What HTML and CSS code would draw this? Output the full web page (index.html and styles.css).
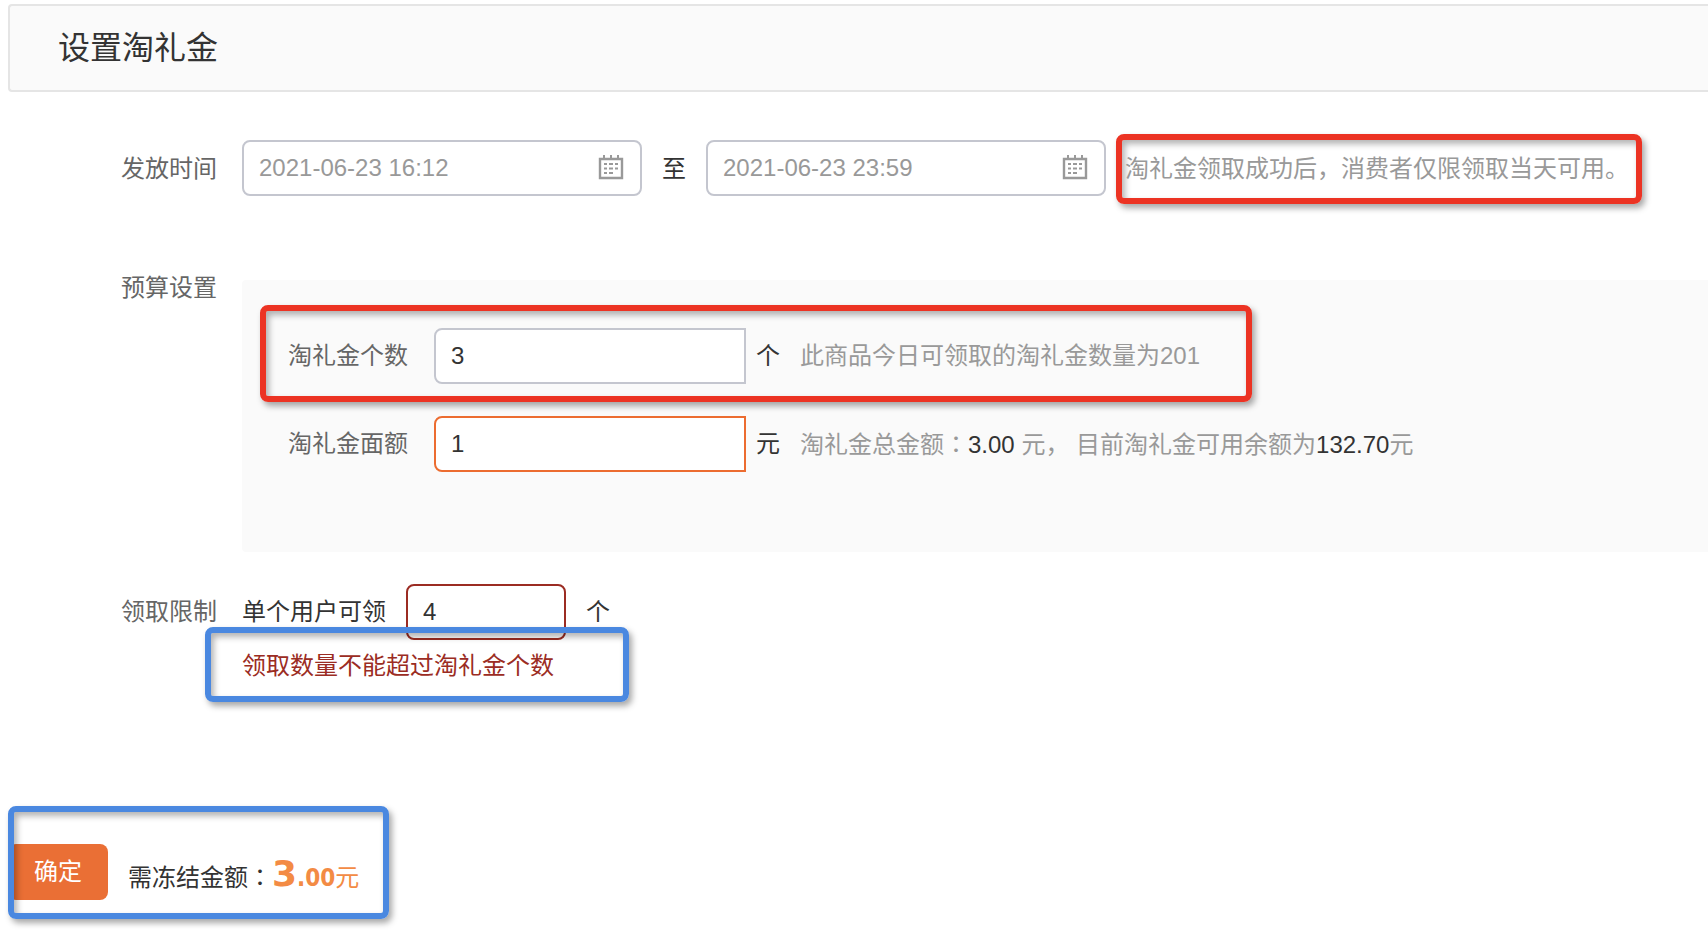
FILE: index.html
```
<!DOCTYPE html>
<html lang="zh-CN">
<head>
<meta charset="utf-8">
<title>设置淘礼金</title>
<link rel="stylesheet" href="styles.css">
</head>
<body>
<svg class="defs" aria-hidden="true">
  <symbol id="calendar" viewBox="0 0 26 26">
    <path d="M2 5h22v19H2z" fill="none" stroke="currentColor" stroke-width="2.400"/>
    <path d="M5 1h2v4H5zM12 1h2v4h-2zM19 1h2v4h-2z" fill="currentColor"/>
    <path d="M6 10h3M11 10h4M17 10h3M6 14.500h3M11 14.500h4M17 14.500h3M6 19h3M11 19h4" stroke="currentColor" stroke-width="2"/>
  </symbol>
</svg>
<header class="page-head"><h1 class="title">设置淘礼金</h1></header>
<form class="form">
  <div class="row row-time">
    <label class="label" for="start">发放时间</label>
    <div class="date"><input class="input muted" id="start" type="text" value="2021-06-23 16:12"><svg class="icon"><use href="#calendar"/></svg></div>
    <label class="to" for="end">至</label>
    <div class="date"><input class="input muted" id="end" type="text" value="2021-06-23 23:59"><svg class="icon"><use href="#calendar"/></svg></div>
    <p class="mark red note">淘礼金领取成功后，消费者仅限领取当天可用。</p>
  </div>
  <div class="row row-budget">
    <span class="label">预算设置</span>
    <div class="panel">
      <div class="line mark red">
        <label class="name" for="count">淘礼金个数</label>
        <input class="input amount" id="count" type="text" value="3">
        <span class="unit">个</span>
        <span class="hint">此商品今日可领取的淘礼金数量为201</span>
      </div>
      <div class="line plain">
        <label class="name" for="value">淘礼金面额</label>
        <input class="input amount active" id="value" type="text" value="1">
        <span class="unit">元</span>
        <span class="hint">淘礼金总金额<span class="colon" lang="zh-TW">：</span><b class="num">3.00</b> 元， 目前淘礼金可用余额为<b class="num">132.70</b>元</span>
      </div>
    </div>
  </div>
  <div class="row row-limit">
    <span class="label">领取限制</span>
    <div class="limit">
      <div class="limit-line">
        <label for="limit">单个用户可领</label>
        <input class="input small invalid" id="limit" type="text" value="4">
        <span>个</span>
      </div>
      <p class="mark blue error">领取数量不能超过淘礼金个数</p>
    </div>
  </div>
  <div class="footer">
    <button class="submit" type="button">确定</button>
    <p class="frozen">需冻结金额<span class="colon" lang="zh-TW">：</span><span class="total"><b class="big">3</b><b class="dec">.00</b>元</span></p>
    <span class="frame mark blue"></span>
  </div>
</form>
</body>
</html>
```
FILE: styles.css
```
* { box-sizing: border-box; }

body {
  margin: 0;
  min-height: 100vh;
  padding: 4px 0 16px 8px;
  background: #fff;
  color: #333;
  font: 400 24px/36px "Liberation Sans", "Noto Sans CJK SC", sans-serif;
  overflow-x: hidden;
}

p, h1 { margin: 0; }

.defs { position: absolute; width: 0; height: 0; }

.page-head {
  padding: 18px 48px;
  border: 2px solid #e5e5e5;
  border-right: 0;
  border-radius: 4px 0 0 4px;
  background: #fafafa;
}

.title { font-size: 32px; line-height: 48px; font-weight: 400; }

.row { display: flex; }

.label { flex: none; width: 209px; margin-right: 25px; text-align: right; color: #666; }

.input {
  height: 56px;
  padding: 0 15px;
  border: 2px solid #c4c6cf;
  border-radius: 8px;
  background: #fff;
  color: #333;
  font: inherit;
  outline: 0;
}

.muted { width: 100%; color: #999; }
.amount { width: 312px; border-radius: 8px 0 0 8px; }
.active { border-color: #ec6c30; }
.small { width: 160px; }
.invalid { border-color: #9b2c23; }

/* Highlight frames */
.mark {
  border: 6px solid;
  border-radius: 8px;
  box-shadow: 3px 4px 6px rgba(0, 0, 0, .35), inset 3px 4px 6px rgba(0, 0, 0, .3);
}
.red { border-color: #ec3323; }
.blue { border-color: #4a88e0; }

.row-time { align-items: center; margin-top: 42px; }
.date { position: relative; flex: none; display: flex; width: 400px; padding-bottom: 2px; }
.icon { position: absolute; right: 18px; top: 14px; width: 26px; height: 26px; color: #999; }
.to { width: 64px; text-align: center; }
.note { margin-left: 10px; padding: 11px 7px 11px 3px; color: #999; white-space: nowrap; }

.row-budget { margin-top: 76px; line-height: 16px; }
.panel {
  flex: 1;
  padding: 25px 18px 80px;
  border-radius: 4px 0 0 4px;
  background: #fafafa;
  line-height: 36px;
}
.line { display: flex; align-items: center; width: 992px; padding: 17px 22px 12px; white-space: nowrap; }
.plain { width: auto; padding: 14px 28px 0; }
.name { width: 120px; margin-right: 26px; color: #666; }
.unit { margin: 0 20px 0 10px; }
.hint { color: #999; }
.num { color: #333; font-weight: 400; }
.colon { font-family: "Noto Sans CJK TC", sans-serif; }

.row-limit { margin-top: 32px; }
.row-limit .label { line-height: 56px; }
.limit-line { display: flex; align-items: center; }
.limit-line .input { margin: 0 20px; }
.error {
  position: relative;
  width: 424px;
  margin: -13px 0 0 -37px;
  padding: 15px 31px 12px;
  color: #9b2c23;
}

.footer { position: relative; display: flex; align-items: center; width: 381px; margin-top: 104px; padding: 38px 0 19px; }
.submit {
  width: 100px;
  height: 56px;
  border: 0;
  border-radius: 8px;
  background: #ea6f35;
  color: #fff;
  font: inherit;
}
.frozen { margin-left: 20px; padding-top: 8px; white-space: nowrap; }
.total { color: #f38b44; }
.big, .dec { font-weight: 700; }
.big { font-family: "DejaVu Sans", sans-serif; font-size: 36px; }
.dec { font-family: "DejaVu Sans Condensed", "DejaVu Sans", sans-serif; }
.frame { position: absolute; inset: 0; pointer-events: none; }
```
